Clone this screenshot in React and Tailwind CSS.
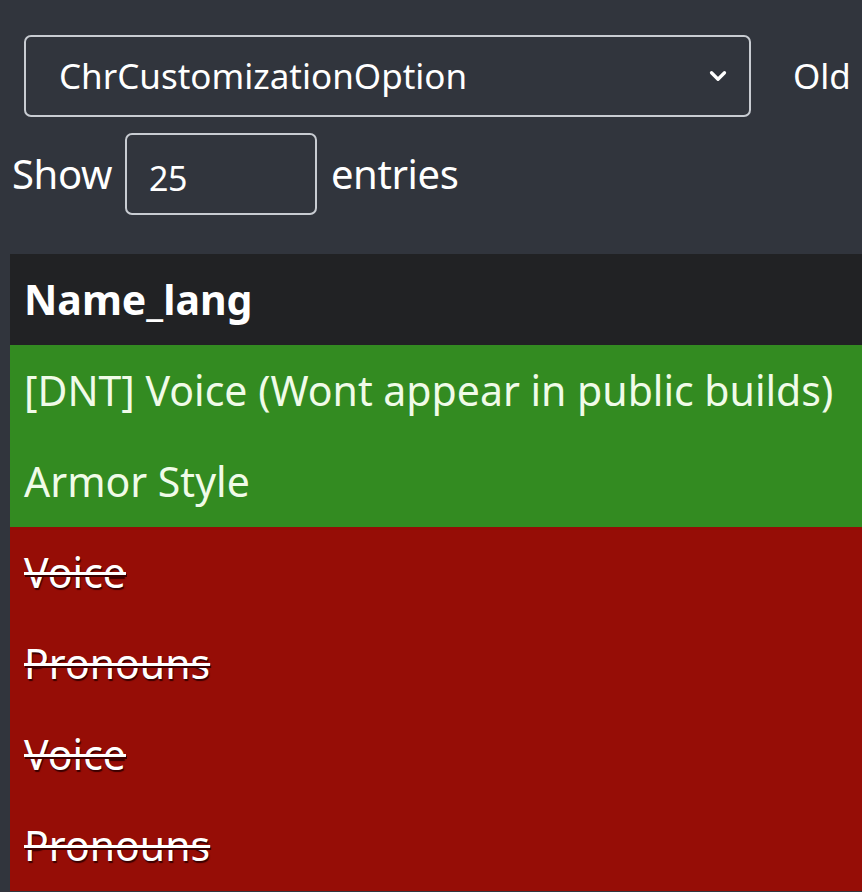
import { ChevronDown } from 'lucide-react';

const added = ['[DNT] Voice (Wont appear in public builds)', 'Armor Style'];
const removed = ['Voice', 'Pronouns', 'Voice', 'Pronouns'];

export default function App() {
  return (
    <div
      className="w-[862px] h-[892px] overflow-hidden bg-[#31353d] text-white"
      style={{ fontFamily: '"Noto Sans", "Open Sans", sans-serif' }}
    >
      <div className="flex items-center pt-[35px] pl-[24px] whitespace-nowrap text-[35px]">
        <div className="w-[727px] h-[82px] shrink-0 flex items-center justify-between pl-[33px] pr-[18px] border-2 border-[#c8ccd2] rounded-[7px]">
          <span>ChrCustomizationOption</span>
          <ChevronDown className="w-[26px] h-[26px]" strokeWidth={3} />
        </div>
        <span className="ml-[42px]">Old</span>
      </div>

      <div className="flex items-center pt-[16px] pl-[12px] whitespace-nowrap text-[40px] tracking-[-0.4px]">
        <span>Show</span>
        <div className="ml-[13px] w-[192px] h-[82px] flex items-center pl-[22px] pt-[8px] border-2 border-[#c8ccd2] rounded-[7px] text-[34px]">
          25
        </div>
        <span className="ml-[14px]">entries</span>
      </div>

      <div className="mt-[39px] ml-[10px] whitespace-nowrap text-[41px]">
        <div className="h-[91px] flex items-center pl-[14px] bg-[#212224] font-bold">Name_lang</div>
        {added.map((t, i) => (
          <div key={i} className="h-[91px] flex items-center pl-[14px] bg-[#338b21] text-[#f0fbe8]">
            {t}
          </div>
        ))}
        {removed.map((t, i) => (
          <div key={i} className="h-[91px] flex items-center pl-[14px] bg-[#960d06]">
            <span className="line-through decoration-[3px] [text-shadow:1px_2px_1px_#3a0000]">{t}</span>
          </div>
        ))}
      </div>
    </div>
  );
}
